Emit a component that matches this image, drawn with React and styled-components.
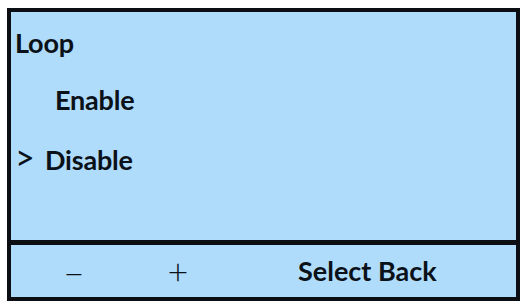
import { styled, createGlobalStyle } from "styled-components";

const Global = createGlobalStyle`
  body {
    margin: 0;
    background: #fff;
    font-family: Lato, "Open Sans", sans-serif;
  }
`

const Screen = styled.div`
  box-sizing: border-box;
  margin: 8px 0 0 7px;
  width: 513px;
  height: 293px;
  border: 4px solid #0b0f14;
  background: #b0dcfb;
  display: flex;
  flex-direction: column;
`

const Menu = styled.div`
  flex: 1;
  display: flex;
  flex-direction: column;
  padding: 16px 0 0 4px;
  border-bottom: 5px solid #0b0f14;
`

const Line = styled.div`
  display: flex;
  align-items: baseline;
  height: 57px;
  line-height: 30px;
  font-size: 27px;
  font-weight: 700;
  letter-spacing: -0.2px;
  color: #0b1118;
`

const Cursor = styled.span`
  width: ${p => p.$w}px;
  font-size: 34px;
  font-weight: 400;
`

const Bar = styled.div`
  height: 52px;
  display: flex;
  align-items: center;
  color: #0b1118;
`

const Key = styled.span`
  width: ${p => p.$w}px;
  text-align: center;
  font-size: ${p => (p.$bold ? 27 : 36)}px;
  font-weight: ${p => (p.$bold ? 700 : 300)};
  line-height: 30px;
  ${p => p.$down && "position: relative; top: 2px;"}
`

export default function App() {
  return (
    <>
      <Global />
      <Screen>
        <Menu>
          <Line><Cursor $w={0} />Loop</Line>
          <Line><Cursor $w={40} />Enable</Line>
          <Line><Cursor $w={30}>&gt;</Cursor>Disable</Line>
        </Menu>
        <Bar>
          <Key $w={52} />
          <Key $w={22} $down>−</Key>
          <Key $w={82} />
          <Key $w={22}>+</Key>
          <Key $w={109} />
          <Key $bold>Select Back</Key>
        </Bar>
      </Screen>
    </>
  );
}
